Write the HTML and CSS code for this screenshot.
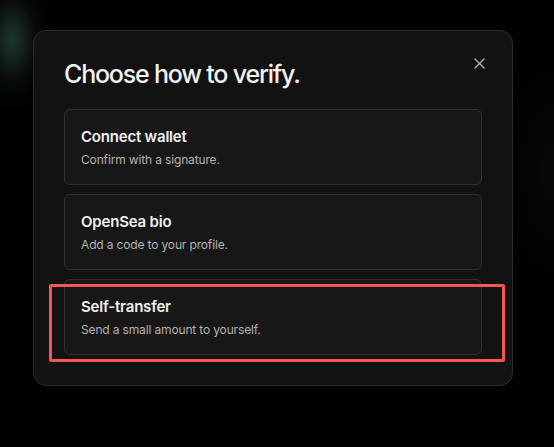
FILE: index.html
```html
<!DOCTYPE html>
<html lang="en">
<head>
<meta charset="utf-8">
<title>Choose how to verify</title>
<link rel="stylesheet" href="styles.css">
</head>
<body>
<div class="modal">
  <button class="close" aria-label="Close">
    <svg width="11" height="11" viewBox="0 0 11 11"><path d="M1 1L10 10M10 1L1 10" stroke="#b4b4b4" stroke-width="1.3" stroke-linecap="round"/></svg>
  </button>
  <h1 class="title">Choose how to verify.</h1>
  <div class="options">
    <div class="option">
      <div class="opt-title">Connect wallet</div>
      <div class="opt-sub">Confirm with a signature.</div>
    </div>
    <div class="option">
      <div class="opt-title">OpenSea bio</div>
      <div class="opt-sub">Add a code to your profile.</div>
    </div>
    <div class="option">
      <div class="opt-title">Self-transfer</div>
      <div class="opt-sub">Send a small amount to yourself.</div>
    </div>
  </div>
</div>
<div class="highlight"></div>
</body>
</html>
```
FILE: styles.css
```css
html, body {
  margin: 0;
  padding: 0;
}
body {
  width: 554px;
  height: 447px;
  overflow: hidden;
  position: relative;
  background:
    radial-gradient(ellipse 40px 70px at 12px 40px, rgba(70,120,112,0.45), rgba(40,70,65,0.15) 60%, rgba(0,0,0,0) 100%),
    radial-gradient(ellipse 50px 120px at 550px 170px, rgba(30,45,42,0.2), rgba(0,0,0,0) 100%),
    #000;
  font-family: Inter, "Noto Sans", sans-serif;
  padding-top: 30px;
  padding-left: 33px;
  box-sizing: border-box;
}
.modal {
  position: relative;
  width: 480px;
  box-sizing: border-box;
  padding: 28px 30px 30px 30px;
  background: #121212;
  border: 1px solid #2c2c2c;
  border-radius: 13px;
}
.close {
  position: absolute;
  top: 27px;
  right: 27px;
  width: 11px;
  height: 11px;
  padding: 0;
  border: 0;
  background: none;
  display: block;
}
.close svg { display: block; }
.title {
  margin: 0 0 20px 0;
  font-size: 25px;
  line-height: 30px;
  font-weight: 500;
  color: #f2f2f2;
  letter-spacing: -1.2px;
}
.options {
  display: flex;
  flex-direction: column;
  gap: 9px;
}
.option {
  background: #171717;
  border: 1px solid #323232;
  border-radius: 6px;
  padding: 17px 16px 16px 16px;
}
.opt-title {
  font-size: 15px;
  line-height: 20px;
  font-weight: 600;
  color: #f0f0f0;
  letter-spacing: -0.2px;
}
.opt-sub {
  margin-top: 5px;
  font-size: 12px;
  line-height: 16px;
  color: #b3b3b3;
  letter-spacing: -0.15px;
}
.highlight {
  position: absolute;
  left: 49px;
  top: 284px;
  width: 456px;
  height: 78px;
  box-sizing: border-box;
  border: 3px solid #f75555;
  border-radius: 2px;
  pointer-events: none;
}
```
